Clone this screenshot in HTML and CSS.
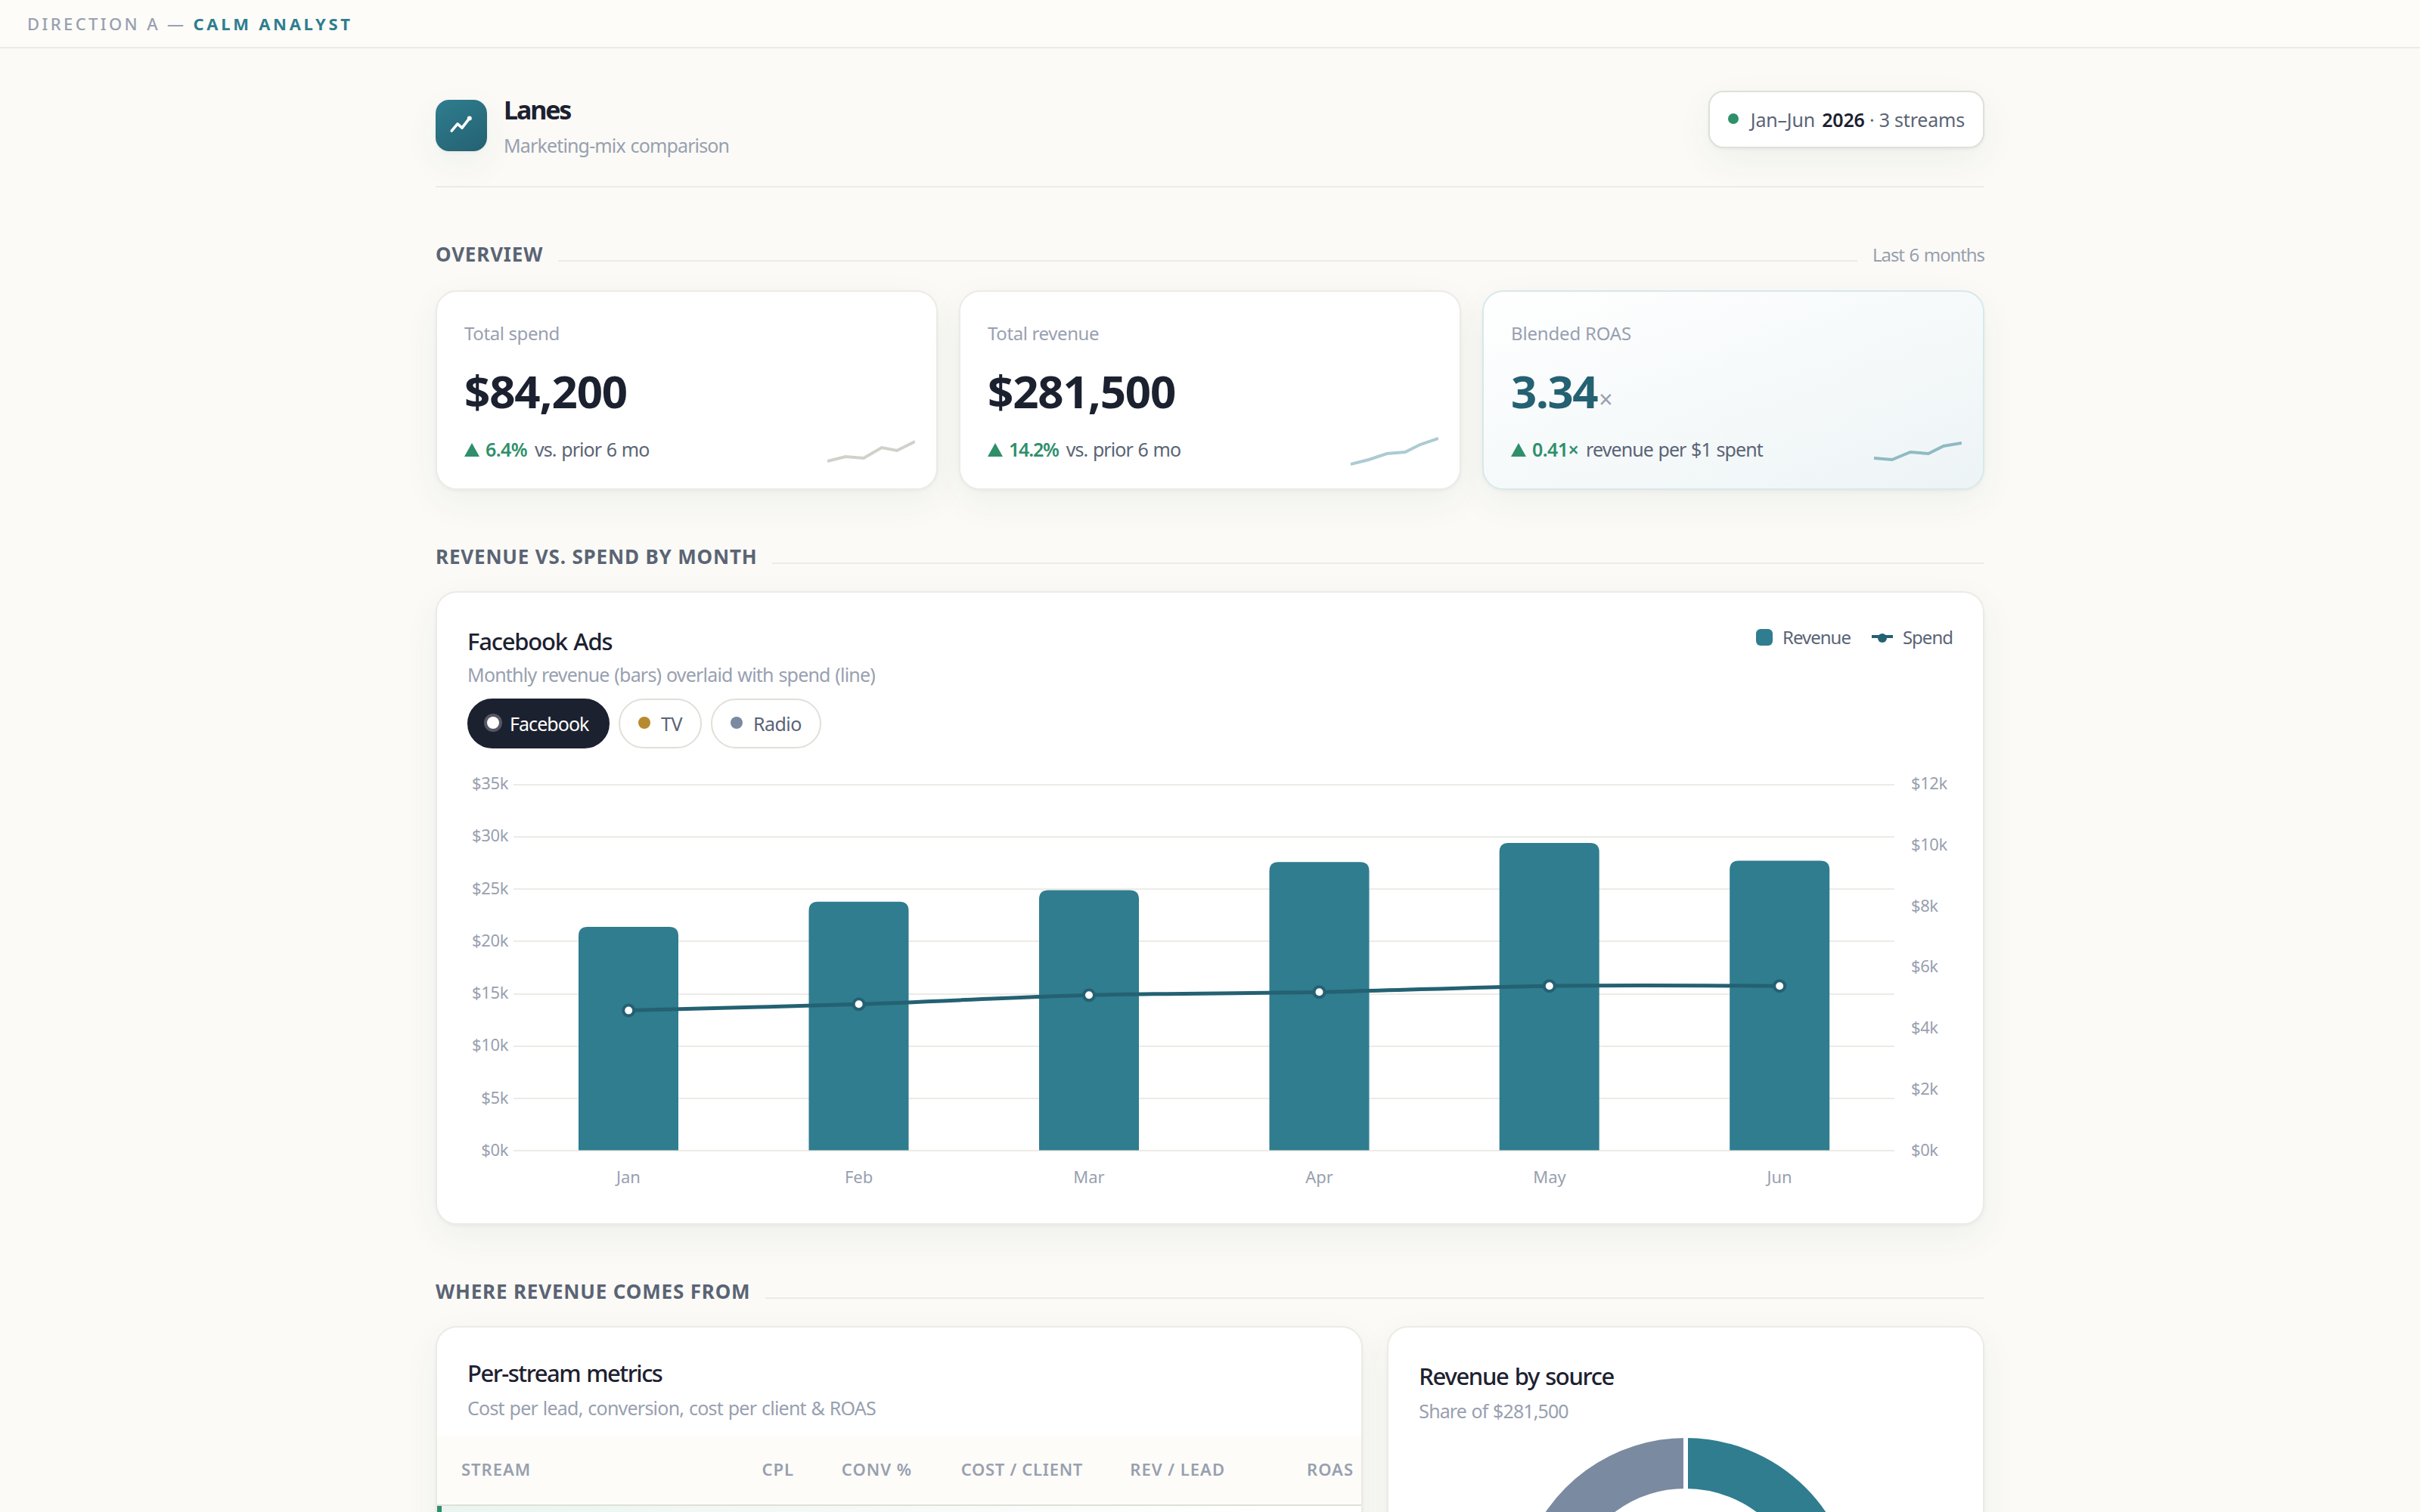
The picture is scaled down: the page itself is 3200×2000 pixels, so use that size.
FILE: index.html
```html
<!DOCTYPE html>
<html lang="en">
<head>
<meta charset="utf-8">
<title>Lanes</title>
<link rel="stylesheet" href="styles.css">
</head>
<body>
<div class="topbar"><span>DIRECTION A —</span><b>CALM ANALYST</b></div>
<main class="wrap">
  <header class="head">
    <div class="brand">
      <div class="logo">
        <svg width="36" height="36" viewBox="0 0 18 18" fill="none" stroke="#fff" stroke-width="1.8" stroke-linecap="round" stroke-linejoin="round"><path d="M2.6 12.6 6.5 7.9l3 2.7L14.2 4.4"/><circle cx="14.4" cy="4.3" r="1.1" fill="#fff" stroke-width=".8"/></svg>
      </div>
      <div>
        <h1 class="name">Lanes</h1>
        <p class="tagline">Marketing-mix comparison</p>
      </div>
    </div>
    <div class="period"><i class="period-dot"></i><span>Jan–Jun <b>2026</b> · 3 streams</span></div>
  </header>

  <div class="section section-first"><h2>OVERVIEW</h2><i class="rule"></i><span class="note">Last 6 months</span></div>
  <div class="kpis">
    <div class="card kpi">
      <div class="kpi-label">Total spend</div>
      <div class="kpi-value">$84,200</div>
      <div class="kpi-delta"><i class="up"></i><b>6.4%</b><span>vs. prior 6 mo</span></div>
      <svg class="spark" viewBox="0 0 58 22"><polyline stroke="#d0d1ca" points="0,18 12,15 24,16 36,9 46,11 58,5"/></svg>
    </div>
    <div class="card kpi">
      <div class="kpi-label">Total revenue</div>
      <div class="kpi-value">$281,500</div>
      <div class="kpi-delta"><i class="up"></i><b class="tight">14.2%</b><span>vs. prior 6 mo</span></div>
      <svg class="spark" viewBox="0 0 58 22"><polyline stroke="#accbd2" points="0,20 12,17 24,13 36,12 46,7 58,3"/></svg>
    </div>
    <div class="card kpi kpi-accent">
      <div class="kpi-label kpi-label-wide">Blended ROAS</div>
      <div class="kpi-value">3.34<small>×</small></div>
      <div class="kpi-delta"><i class="up"></i><b>0.41×</b><span>revenue per $1 spent</span></div>
      <svg class="spark" viewBox="0 0 58 22"><polyline stroke="#8fbac3" points="0,16 12,17 24,12 36,13 46,8 58,6"/></svg>
    </div>
  </div>

  <div class="section"><h2>REVENUE VS. SPEND BY MONTH</h2><i class="rule"></i></div>
  <div class="card chart-card">
    <div class="chart-head">
      <div>
        <h3 class="chart-title">Facebook Ads</h3>
        <p class="chart-sub">Monthly revenue (bars) overlaid with spend (line)</p>
        <div class="tabs">
          <span class="tab tab-on"><i></i><span>Facebook</span></span>
          <span class="tab tab-tv"><i></i><span>TV</span></span>
          <span class="tab tab-radio"><i></i><span>Radio</span></span>
        </div>
      </div>
      <div class="legend">
        <span class="legend-item"><i class="swatch"></i>Revenue</span>
        <span class="legend-item"><svg width="28" height="14" fill="#246172"><rect y="4" width="28" height="4"/><circle cx="14" cy="8" r="6"/></svg>Spend</span>
      </div>
    </div>
    <svg class="chart" viewBox="0 0 1964 628">
      <path class="grid" d="M61 48H1887M61 117H1887M61 186H1887M61 255H1887M61 325H1887M61 394H1887M61 463H1887M61 532H1887"/>
      <g class="bars">
        <path d="M147 531.5V248q0-12 12-12h108q12 0 12 12V531.5z"/>
        <path d="M451.5 531.5V214.7q0-12 12-12h108q12 0 12 12V531.5z"/>
        <path d="M756 531.5V199.5q0-12 12-12h108q12 0 12 12V531.5z"/>
        <path d="M1060.5 531.5V162.3q0-12 12-12h108q12 0 12 12V531.5z"/>
        <path d="M1364.7 531.5V137q0-12 12-12h108q12 0 12 12V531.5z"/>
        <path d="M1669.2 531.5V160.6q0-12 12-12h108q12 0 12 12V531.5z"/>
      </g>
      <path class="line" d="M213.2 346.6C213.2 346.6 426.3 341.3 517.6 338.3S730.7 328.7 822 326.3S1035.2 324.1 1126.5 322.3S1339.5 315.4 1430.8 314.2S1735.2 314.2 1735.2 314.2"/>
      <g class="points"><circle cx="213.2" cy="346.6" r="7"/><circle cx="517.6" cy="338.3" r="7"/><circle cx="822" cy="326.3" r="7"/><circle cx="1126.5" cy="322.3" r="7"/><circle cx="1430.8" cy="314.2" r="7"/><circle cx="1735.2" cy="314.2" r="7"/></g>
      <g class="axis axis-left"><text x="54" y="54">$35k</text><text x="54" y="123">$30k</text><text x="54" y="193">$25k</text><text x="54" y="262">$20k</text><text x="54" y="331">$15k</text><text x="54" y="400">$10k</text><text x="54" y="470">$5k</text><text x="54" y="539">$0k</text></g>
      <g class="axis"><text x="1909" y="54">$12k</text><text x="1909" y="135">$10k</text><text x="1909" y="216">$8k</text><text x="1909" y="296">$6k</text><text x="1909" y="377">$4k</text><text x="1909" y="458">$2k</text><text x="1909" y="539">$0k</text></g>
      <g class="axis axis-months"><text x="213" y="575">Jan</text><text x="517.6" y="575">Feb</text><text x="822" y="575">Mar</text><text x="1126.5" y="575">Apr</text><text x="1431" y="575">May</text><text x="1735" y="575">Jun</text></g>
    </svg>
  </div>

  <div class="section"><h2>WHERE REVENUE COMES FROM</h2><i class="rule"></i></div>
  <div class="split">
    <div class="card metrics">
      <div class="metrics-head">
        <h3 class="panel-title">Per-stream metrics</h3>
        <p class="panel-sub">Cost per lead, conversion, cost per client &amp; ROAS</p>
      </div>
      <div class="thead"><span>STREAM</span><span>CPL</span><span>CONV %</span><span class="snug">COST / CLIENT</span><span>REV / LEAD</span><span>ROAS</span></div>
      <div class="row-best"></div>
    </div>
    <div class="card source">
      <h3 class="panel-title">Revenue by source</h3>
      <p class="panel-sub">Share of $281,500</p>
      <svg class="donut" viewBox="-224 -224 448 448" fill="none">
        <g stroke-width="67" transform="rotate(-90)">
          <circle r="190.5" stroke="#2f7d8f" pathLength="100" stroke-dasharray="55 45"/>
          <circle r="190.5" stroke="#b88a2e" pathLength="100" stroke-dasharray="25 75" stroke-dashoffset="-55"/>
          <circle r="190.5" stroke="#7a8aa1" pathLength="100" stroke-dasharray="20 80" stroke-dashoffset="-80"/>
        </g>
        <g stroke="#fff" stroke-width="6"><path d="M0-150V-226"/><path d="M0-150V-226" transform="rotate(198)"/><path d="M0-150V-226" transform="rotate(288)"/></g>
      </svg>
    </div>
  </div>
</main>
</body>
</html>
```
FILE: styles.css
```css
* { box-sizing: border-box; margin: 0; padding: 0; }
html, body { height: 100%; overflow: hidden; }
body { background: #fbfaf6; color: #1c2130; font: 400 25px/38px "Noto Sans", "Open Sans", sans-serif; letter-spacing: -.75px; }
i { display: block; flex: none; }
b { font-weight: 600; }
.topbar { display: flex; align-items: center; gap: 9px; height: 64px; padding: 0 36px; border-bottom: 2px solid #ecebe6; background: #fdfcf8; color: #98a0b0; font-size: 22px; font-weight: 500; letter-spacing: 3.4px; }
.topbar b { color: #2f7d8f; font-weight: 700; letter-spacing: 3.7px; }
.wrap { width: 2048px; margin: 0 auto; }

.head { display: flex; justify-content: space-between; align-items: flex-start; height: 184px; padding-top: 56px; border-bottom: 2px solid #ecebe6; }
.brand { display: flex; gap: 22px; }
.logo { display: flex; align-items: center; justify-content: center; width: 68px; height: 68px; margin-top: 12px; border-radius: 18px; background: linear-gradient(150deg, #2f7d8f, #246172); box-shadow: 0 2px 4px rgba(28, 33, 48, .04), 0 16px 48px rgba(28, 60, 60, .06); }
.name { font-size: 34px; line-height: 50px; font-weight: 700; letter-spacing: -2.1px; }
.tagline { color: #98a0b0; line-height: 45px; letter-spacing: -.85px; word-spacing: 1px; }
.period { display: flex; align-items: center; gap: 16px; height: 76px; padding: 0 24px; border: 2px solid #dfe0d9; border-radius: 20px; background: #fff; color: #5a6475; letter-spacing: -.05px; box-shadow: 0 2px 4px rgba(28, 33, 48, .04), 0 16px 48px rgba(28, 60, 60, .06); }
.period b { margin-left: 3px; color: #1c2130; }
.period span { letter-spacing: -.2px; }
.period-dot { width: 14px; height: 14px; margin-top: -2px; border-radius: 50%; background: #2f8f6b; }

.section { display: flex; align-items: baseline; gap: 20px; height: 40px; margin: 68px 0 26px; line-height: 40px; }
.section-first { margin-bottom: 28px; }
.section h2 { color: #5a6475; font-size: 26px; line-height: 40px; font-weight: 700; letter-spacing: .83px; }
.rule { flex: 1; height: 2px; background: #ecebe6; }
.note { color: #98a0b0; font-size: 24px; letter-spacing: -1.1px; word-spacing: 1.5px; }

.card { border: 2px solid #ecebe6; border-radius: 28px; background: #fff; box-shadow: 0 2px 4px rgba(28, 33, 48, .04), 0 16px 48px rgba(28, 60, 60, .06); }
.kpis { display: grid; grid-template-columns: repeat(3, 1fr); gap: 28px; }
.kpi { position: relative; height: 264px; padding: 36px; }
.kpi-accent { border-color: #d8e8ea; background: linear-gradient(160deg, #fff 0%, #edf4f6 100%); }
.kpi-label { color: #98a0b0; font-size: 24px; line-height: 37px; letter-spacing: -.38px; }
.kpi-label-wide { letter-spacing: -.18px; }
.kpi-value { margin-top: 22px; font-size: 60px; line-height: 72px; font-weight: 700; letter-spacing: -1.15px; height: 72px; }
.kpi-accent .kpi-value { color: #246172; letter-spacing: -1.4px; }
.kpi-value small { margin-left: 2px; color: #98a0b0; font-size: 32px; font-weight: 400; line-height: 1; }
.kpi-delta { display: flex; align-items: baseline; margin-top: 22px; color: #5a6475; letter-spacing: -.92px; word-spacing: 1px; }
.kpi-delta b { margin: 0 10px 0 8px; color: #2f8f6b; letter-spacing: -.6px; }
.kpi-delta .tight { letter-spacing: -1.2px; }
.up { width: 20px; height: 18px; background: #2f8f6b; clip-path: polygon(50% 0, 100% 100%, 0 100%); }
.spark { position: absolute; right: 28px; bottom: 28px; width: 116px; height: 44px; fill: none; stroke-width: 2; overflow: hidden; }

.chart-card { height: 838px; }
.chart-head { display: flex; justify-content: space-between; align-items: flex-start; padding: 36px 40px 0; }
.chart-title { font-size: 31px; line-height: 56px; font-weight: 500; letter-spacing: -1.2px; word-spacing: 1.5px; }
.chart-sub { color: #98a0b0; line-height: 33px; letter-spacing: -.8px; word-spacing: 1px; }
.tabs { display: flex; gap: 12px; margin-top: 15px; }
.tab { display: flex; align-items: center; gap: 14px; height: 66px; padding: 0 24px; border: 2px solid #dfe0d9; border-radius: 33px; color: #5a6475; letter-spacing: -.5px; }
.tab i { width: 16px; height: 16px; margin-top: -2px; border-radius: 50%; }
.tab-on { padding-right: 25.5px; border-color: #1c2130; background: #1c2130; color: #fff; letter-spacing: -.95px; }
.tab-on i { background: #fff; box-shadow: 0 0 0 4px rgba(255, 255, 255, .25); }
.tab-tv i { background: #b88a2e; }
.tab-radio i { background: #7a8aa1; }
.legend { display: flex; gap: 28px; margin-top: 5px; color: #5a6475; font-size: 24px; line-height: 36px; letter-spacing: -1px; }
.legend-item { display: flex; align-items: center; gap: 13px; }
.swatch { width: 22px; height: 22px; border-radius: 6px; background: #2f7d8f; }
.chart { display: block; width: 1964px; height: 628px; margin: 0 40px; }
.grid { stroke: #ecebe6; stroke-width: 2; }
.bars { fill: #2f7d8f; }
.line { fill: none; stroke: #246172; stroke-width: 5; }
.points { fill: #fff; stroke: #246172; stroke-width: 4; }
.axis { fill: #98a0b0; font-size: 22px; letter-spacing: -.4px; }
.axis-left { text-anchor: end; }
.axis-months { text-anchor: middle; letter-spacing: 0; }

.split { display: grid; grid-template-columns: 1.553fr 1fr; gap: 32px; height: 218px; }
.split .card { height: 620px; }
.panel-title { font-size: 31px; line-height: 44px; font-weight: 500; letter-spacing: -1.5px; word-spacing: 1.5px; }
.panel-sub { color: #98a0b0; line-height: 48px; letter-spacing: -.77px; word-spacing: 1px; }
.metrics { overflow: hidden; }
.metrics-head { padding: 38px 40px 14px; }
.thead { display: grid; grid-template-columns: 200px 240px 156px 226px 188px 170px; height: 92px; padding: 28px 0 0 32px; border-bottom: 2px solid #dfe0d9; background: #fdfcf8; color: #98a0b0; font-size: 22px; line-height: 31px; font-weight: 600; letter-spacing: 1px; text-align: right; }
.thead span:first-child { text-align: left; }
.thead .snug { letter-spacing: .7px; }
.row-best { height: 120px; border-left: 6px solid #2f8f6b; background: linear-gradient(90deg, #eaf4f0, #fff 90%); }
.source { padding: 42px 40px; }
.source .panel-title { letter-spacing: -1.35px; }
.source .panel-sub { letter-spacing: -.9px; }
.donut { display: block; width: 448px; height: 448px; margin: 12px auto 0; }
```
